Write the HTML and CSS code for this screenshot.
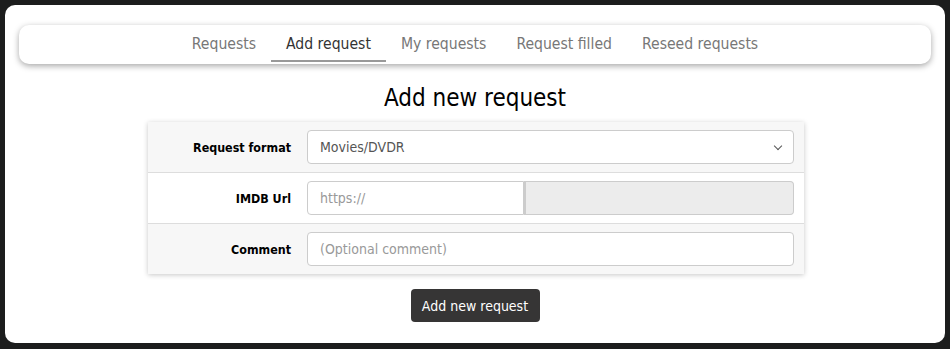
FILE: index.html
```html
<!DOCTYPE html>
<html lang="en">
<head>
  <meta charset="UTF-8">
  <title>Add request</title>
  <link rel="stylesheet" href="styles.css">
</head>
<body>
  <div class="page">
    <nav class="tabs">
      <a href="#" class="tab">Requests</a>
      <a href="#" class="tab active">Add request</a>
      <a href="#" class="tab">My requests</a>
      <a href="#" class="tab">Request filled</a>
      <a href="#" class="tab">Reseed requests</a>
    </nav>

    <h1>Add new request</h1>

    <form class="request-form">
      <div class="form-table">
        <div class="row alt">
          <label for="format">Request format</label>
          <div class="field select-wrap">
            <select id="format">
              <option>Movies/DVDR</option>
            </select>
          </div>
        </div>
        <div class="row">
          <label for="imdb">IMDB Url</label>
          <div class="field url-group">
            <input type="text" id="imdb" placeholder="https://">
            <span class="url-preview"></span>
          </div>
        </div>
        <div class="row alt">
          <label for="comment">Comment</label>
          <div class="field">
            <input type="text" id="comment" placeholder="(Optional comment)">
          </div>
        </div>
      </div>
      <button type="submit">Add new request</button>
    </form>
  </div>
</body>
</html>
```

FILE: styles.css
```css
body {
  margin: 0;
  padding: 5px;
  background-color: #1c1d1d;
  font-family: 'DejaVu Sans', sans-serif;
  font-stretch: condensed;
}

.page {
  background: #fff;
  border-radius: 10px;
  height: 338px;
  box-sizing: border-box;
  padding: 20px 14px;
}

.tabs {
  display: flex;
  justify-content: center;
  height: 39px;
  border-radius: 10px;
  box-shadow: 0 2px 6px rgba(0, 0, 0, 0.35);
}

.tab {
  padding: 10px 15px 0;
  height: 25px;
  color: #777;
  text-decoration: none;
  font-size: 15.6px;
  border-bottom: 2px solid transparent;
}

.tab.active {
  color: #333;
  border-bottom-color: #999;
}

h1 {
  margin: 20px 0 0;
  height: 38px;
  text-align: center;
  font-weight: normal;
  font-size: 24px;
  color: #000;
}

.request-form {
  display: flex;
  flex-direction: column;
  align-items: center;
}

.form-table {
  width: 656px;
  margin-left: 2px;
  box-shadow: 0 1px 5px rgba(0, 0, 0, 0.22);
}

.row {
  display: grid;
  grid-template-columns: 150px 1fr;
  align-items: center;
  height: 50px;
  background: #fff;
  border-bottom: 1px solid #ddd;
}

.row:last-child {
  border-bottom: none;
}

.row.alt {
  background: #f7f7f7;
}

label {
  text-align: right;
  padding-right: 7px;
  font-weight: bold;
  font-size: 12.4px;
  color: #000;
}

.field {
  padding: 0 10px 0 9px;
}

select, input {
  width: 100%;
  height: 34px;
  box-sizing: border-box;
  border: 1px solid #ccc;
  border-radius: 4px;
  padding: 0 12px;
  background: #fff;
  font-family: inherit;
  font-stretch: condensed;
  font-size: 14px;
  color: #555;
}

select {
  appearance: none;
}

.select-wrap {
  position: relative;
}

/* chevron drawn over the select */
.select-wrap::after {
  content: "";
  position: absolute;
  right: 23px;
  top: 13px;
  width: 5px;
  height: 5px;
  border-right: 1.5px solid #555;
  border-bottom: 1.5px solid #555;
  transform: rotate(45deg);
  pointer-events: none;
}

input::placeholder {
  color: #999;
}

.url-group {
  display: flex;
}

.url-group input {
  width: 217px;
  flex: none;
  border-radius: 4px 0 0 4px;
}

.url-preview {
  flex: 1;
  height: 34px;
  box-sizing: border-box;
  background: #ececec;
  border: 1px solid #ccc;
  border-left: 2px solid #ccc;
  border-radius: 0 4px 4px 0;
}

button {
  margin-top: 15px;
  width: 129px;
  height: 33px;
  background-color: #363535;
  color: #fff;
  border: none;
  border-radius: 4px;
  font-family: inherit;
  font-stretch: condensed;
  font-size: 14px;
}
```
